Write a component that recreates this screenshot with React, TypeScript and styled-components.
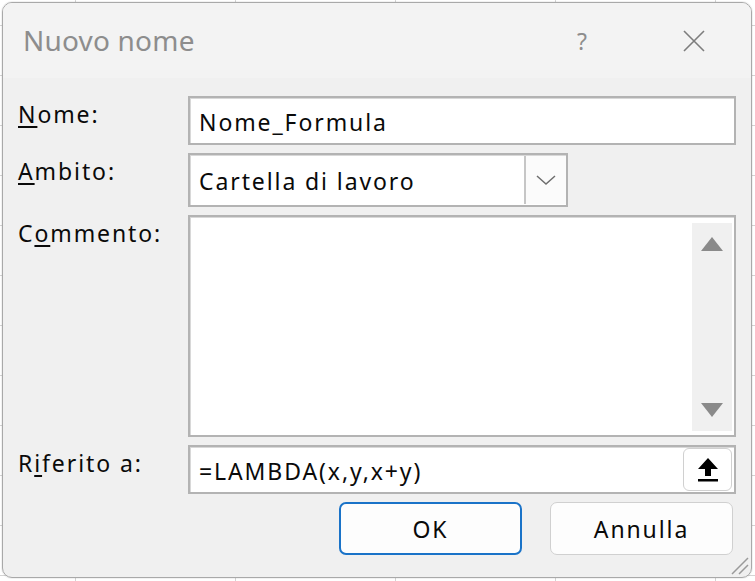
import React from 'react';
import styled, { createGlobalStyle } from 'styled-components';

const GlobalStyle = createGlobalStyle`
  html, body {
    margin: 0;
    padding: 0;
    width: 755px;
    height: 581px;
    overflow: hidden;
  }
  body {
    background-color: #ffffff;
    background-image:
      linear-gradient(to right, #d4d4d4 1px, transparent 1px),
      linear-gradient(to bottom, #d4d4d4 1px, transparent 1px);
    background-size: 160px 50px;
    background-position: 75px 25px;
    font-family: "Noto Sans", "Open Sans", sans-serif;
  }
`;

const Page = styled.div`
  box-sizing: border-box;
  width: 755px;
  height: 581px;
  padding: 2px 3px 3px 2px;
  display: flex;
`;

const Dialog = styled.div`
  position: relative;
  flex: 1;
  display: flex;
  flex-direction: column;
  background: #f0f0f0;
  border: 1px solid #a9a9a9;
  border-radius: 10px;
  overflow: hidden;
  box-shadow: 0 0 0 1px rgba(0, 0, 0, 0.05);
`;

const TitleBar = styled.div`
  height: 75px;
  display: flex;
  align-items: center;
  background: #f3f3f3;
  padding-left: 20px;
`;

const Title = styled.div`
  flex: 1;
  font-size: 28px;
  color: #8d8d8d;
  letter-spacing: 0.2px;
  padding-bottom: 2px;
`;

const TitleButton = styled.div<{ $w: number }>`
  width: ${p => p.$w}px;
  height: 75px;
  display: flex;
  align-items: center;
  justify-content: center;
  color: #8d8d8d;
  font-size: 23px;
`;

const Body = styled.div`
  flex: 1;
  display: grid;
  grid-template-columns: 170px 1fr;
  grid-template-rows: 49px 54px 222px 49px 53px;
  row-gap: 8px;
  padding: 18px 15px 0 15px;
`;

const Label = styled.div`
  font-size: 23px;
  letter-spacing: 1.9px;
  color: #0a0a0a;
  padding-top: 3px;
  line-height: 30px;
`;

const Key = styled.span`
  text-decoration: underline;
  text-underline-offset: 3px;
  text-decoration-thickness: 2px;
`;

const Field = styled.div<{ $w?: number }>`
  box-sizing: border-box;
  height: 100%;
  width: ${p => (p.$w ? `${p.$w}px` : 'auto')};
  background: #ffffff;
  border: 2px solid #b3b3b3;
  box-shadow: inset 1px 1px 0 #d8d8d8;
  display: flex;
  align-items: center;
  position: relative;
`;

const FieldText = styled.div`
  flex: 1;
  padding-left: 9px;
  font-size: 23px;
  letter-spacing: 1.9px;
  color: #0a0a0a;
  white-space: nowrap;
  padding-top: 2px;
`;

const DropButton = styled.div`
  box-sizing: border-box;
  width: 42px;
  align-self: stretch;
  margin: 1px 0;
  border-left: 2px solid #c6c6c6;
  background: #fbfbfb;
  display: flex;
  align-items: center;
  justify-content: center;
`;

const ScrollBar = styled.div`
  box-sizing: border-box;
  align-self: stretch;
  width: 40px;
  margin: 6px 2px 4px 0;
  background: #f0f0f0;
  display: flex;
  flex-direction: column;
  justify-content: space-between;
  align-items: center;
  padding: 14px 0 14px;
`;

const UploadButton = styled.div`
  box-sizing: border-box;
  width: 49px;
  height: 43px;
  margin-right: 2px;
  border: 1px solid #d0d0d0;
  border-radius: 6px;
  background: #ffffff;
  display: flex;
  align-items: center;
  justify-content: center;
`;

const ButtonRow = styled.div`
  grid-column: 1 / span 2;
  display: flex;
  justify-content: flex-end;
  gap: 28px;
  padding-right: 3px;
`;

const Button = styled.div<{ $primary?: boolean }>`
  box-sizing: border-box;
  flex: 0 0 183px;
  height: 53px;
  border-radius: 7px;
  background: #fdfdfd;
  border: ${p => (p.$primary ? '2px solid #1a73c8' : '1px solid #d0d0d0')};
  display: flex;
  align-items: center;
  justify-content: center;
  font-size: 23px;
  letter-spacing: 1.9px;
  color: #0a0a0a;
`;

const Grip = styled.svg`
  position: absolute;
  right: 1px;
  bottom: 1px;
`;

export default function App() {
  return (
    <>
      <GlobalStyle />
      <Page>
        <Dialog>
          <TitleBar>
            <Title>Nuovo nome</Title>
            <TitleButton $w={132}>?</TitleButton>
            <TitleButton $w={92}>
              <svg width="24" height="24" viewBox="0 0 24 24">
                <path d="M2 2 L22 22 M22 2 L2 22" stroke="#7d7d7d" strokeWidth="1.6" fill="none" />
              </svg>
            </TitleButton>
            <div style={{ width: 11 }} />
          </TitleBar>
          <Body>
            <Label><Key>N</Key>ome:</Label>
            <Field>
              <FieldText>Nome_Formula</FieldText>
            </Field>

            <Label><Key>A</Key>mbito:</Label>
            <Field $w={380}>
              <FieldText>Cartella di lavoro</FieldText>
              <DropButton>
                <svg width="22" height="13" viewBox="0 0 22 13">
                  <path d="M2 2 L11 10 L20 2" stroke="#6e6e6e" strokeWidth="1.5" fill="none" />
                </svg>
              </DropButton>
            </Field>

            <Label>C<Key>o</Key>mmento:</Label>
            <Field>
              <FieldText />
              <ScrollBar>
                <svg width="22" height="14" viewBox="0 0 22 14">
                  <path d="M11 0 L22 14 L0 14 Z" fill="#8a8a8a" />
                </svg>
                <svg width="22" height="14" viewBox="0 0 22 14">
                  <path d="M0 0 L22 0 L11 14 Z" fill="#8a8a8a" />
                </svg>
              </ScrollBar>
            </Field>

            <Label>R<Key>i</Key>ferito a:</Label>
            <Field>
              <FieldText>=LAMBDA(x,y,x+y)</FieldText>
              <UploadButton>
                <svg width="24" height="26" viewBox="0 0 24 26">
                  <path d="M12 1 L22 12 L15 12 L15 19 L9 19 L9 12 L2 12 Z" fill="#000" />
                  <rect x="2" y="22" width="20" height="2.5" fill="#000" />
                </svg>
              </UploadButton>
            </Field>

            <ButtonRow>
              <Button $primary>OK</Button>
              <Button>Annulla</Button>
            </ButtonRow>
          </Body>
          <Grip width="22" height="22" viewBox="0 0 22 22">
            <path d="M20 4 L4 20 M20 11 L11 20" stroke="#9a9a9a" strokeWidth="1.5" />
          </Grip>
        </Dialog>
      </Page>
    </>
  );
}
